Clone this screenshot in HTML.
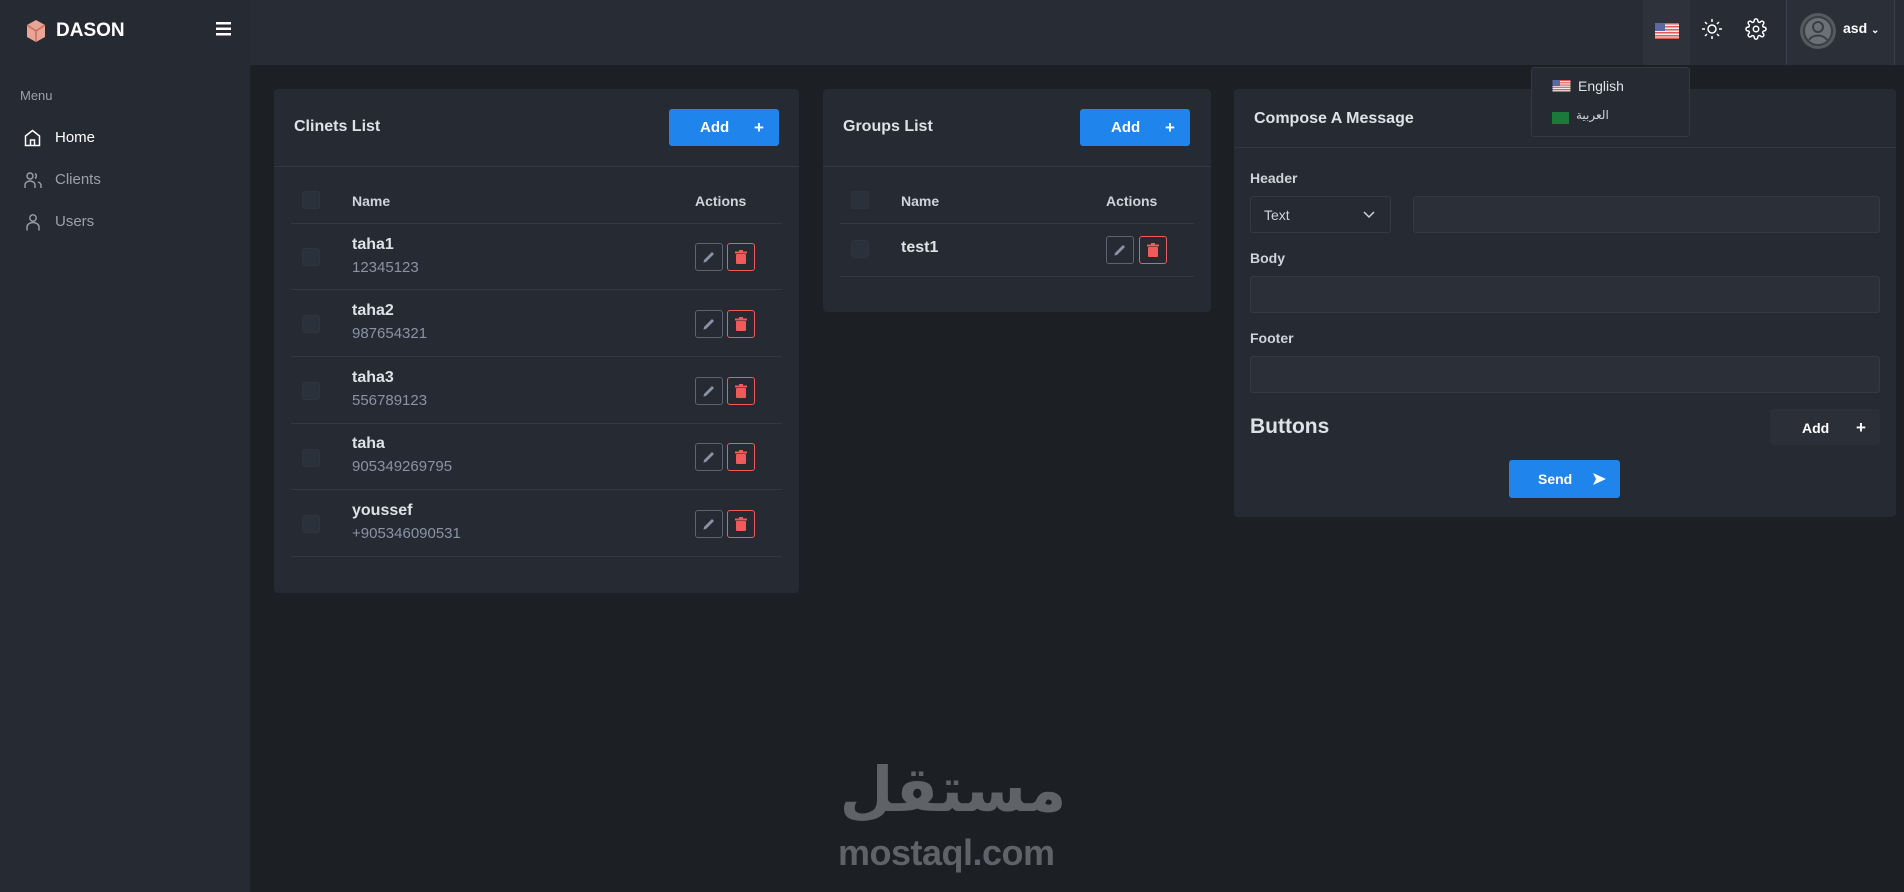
<!DOCTYPE html>
<html><head><meta charset="utf-8"><style>
*{box-sizing:border-box;margin:0;padding:0}
body{width:1904px;height:892px;background:#1c1f24;font-family:"Liberation Sans","Noto Sans CJK SC",sans-serif;position:relative;overflow:hidden;color:#ced4da}
.a{position:absolute}
.side{left:0;top:0;width:250px;height:892px;background:#252a33}
.top{left:250px;top:0;width:1654px;height:65px;background:#282d35}
.card{background:#252a33;border-radius:4px}
.btn{background:#1f84ec;color:#fff;border-radius:3px;font-size:15px;font-weight:bold}
.hr{height:1px;background:#333943}
.cb{width:18px;height:18px;border-radius:3px;background:#2b313a;border:1px solid #2f353e}
.nm{font-weight:bold;font-size:16px;color:#dee2e6}
.ph{font-size:15px;color:#8a93a5}
.th{font-size:14px;font-weight:bold;color:#ced4da}
.eb{width:28px;height:28px;border:1px solid #5d6470;border-radius:3px}
.db{width:28px;height:28px;border:1px solid #f05a5a;border-radius:3px}
.lbl{font-size:14px;font-weight:bold;color:#ced4da}
.inp{background:#2a2f38;border:1px solid #343a44;border-radius:3px}
.pl{font-size:17px;line-height:17px}
</style></head><body>
<div class="a side"></div>
<div class="a top"></div>
<svg class="a" style="left:26px;top:19px" width="20" height="24" viewBox="0 0 20 24"><path d="M10 1 L19 6 V18 L10 23 L1 18 V6Z" fill="#e8a494"/><path d="M10 12 V23 M1 6 L10 12 L19 6" stroke="#c76f5e" stroke-width="1.5" fill="none"/></svg>
<div class="a" style="left:56px;top:20px;font-size:19px;font-weight:bold;color:#fff">DASON</div>
<svg class="a" style="left:216px;top:22px" width="15" height="14"><rect y="0" width="15" height="2.5" fill="#fff"/><rect y="5.5" width="15" height="2.5" fill="#fff"/><rect y="11" width="15" height="2.5" fill="#fff"/></svg>
<div class="a" style="left:20px;top:88px;font-size:13px;color:#9aa1ab">Menu</div>
<svg class="a" style="left:24px;top:129px" width="17" height="18" viewBox="0 0 17 18" fill="none" stroke="#fff" stroke-width="1.5"><path d="M1.5 7 L8.5 1.5 L15.5 7 V16.5 H1.5Z M6.5 16.5 V11 H10.5 V16.5"/></svg>
<div class="a" style="left:55px;top:129px;font-size:15px;color:#fff">Home</div>
<svg class="a" style="left:24px;top:171px" width="18" height="18" viewBox="0 0 18 18" fill="none" stroke="#9aa1ab" stroke-width="1.4"><circle cx="6" cy="5" r="3"/><path d="M1 17 V14 a5 4 0 0 1 10 0 V17 M11 2.5 a3 3 0 0 1 0 5 M14 11 a4 4 0 0 1 3 3 V17"/></svg>
<div class="a" style="left:55px;top:171px;font-size:15px;color:#9aa1ab">Clients</div>
<svg class="a" style="left:25px;top:213px" width="16" height="18" viewBox="0 0 16 18" fill="none" stroke="#9aa1ab" stroke-width="1.4"><circle cx="8" cy="5" r="3.2"/><path d="M2 17.5 V14 a6 4.5 0 0 1 12 0 V17.5"/></svg>
<div class="a" style="left:55px;top:213px;font-size:15px;color:#9aa1ab">Users</div>

<div class="a" style="left:1643px;top:0;width:47px;height:65px;background:#2e333b"></div>
<svg class="a" style="left:1655px;top:23px" width="24" height="16" viewBox="0 0 24 16"><rect width="24" height="16" fill="#eee"/><g fill="#e05a5a"><rect y="0" width="24" height="1.5"/><rect y="3" width="24" height="1.5"/><rect y="6" width="24" height="1.5"/><rect y="9" width="24" height="1.5"/><rect y="12" width="24" height="1.5"/><rect y="14.5" width="24" height="1.5"/></g><rect width="10" height="8" fill="#5a6aa0"/></svg>
<svg class="a" style="left:1701px;top:18px" width="22" height="22" viewBox="0 0 22 22" fill="none" stroke="#fff" stroke-width="1.5"><circle cx="11" cy="11" r="4"/><path d="M11 1v3M11 18v3M1 11h3M18 11h3M4 4l2 2M16 16l2 2M4 18l2-2M16 6l2-2"/></svg>
<svg class="a" style="left:1745px;top:18px" width="22" height="22" viewBox="0 0 24 24" fill="none" stroke="#fff" stroke-width="1.6"><circle cx="12" cy="12" r="3"/><path d="M19.4 15a1.7 1.7 0 0 0 .3 1.8l.1.1a2 2 0 1 1-2.8 2.8l-.1-.1a1.7 1.7 0 0 0-2.9 1.2V21a2 2 0 1 1-4 0v-.1a1.7 1.7 0 0 0-2.9-1.2l-.1.1a2 2 0 1 1-2.8-2.8l.1-.1A1.7 1.7 0 0 0 3.1 14H3a2 2 0 1 1 0-4h.1a1.7 1.7 0 0 0 1.2-2.9l-.1-.1a2 2 0 1 1 2.8-2.8l.1.1A1.7 1.7 0 0 0 10 3.1V3a2 2 0 1 1 4 0v.1a1.7 1.7 0 0 0 2.9 1.2l.1-.1a2 2 0 1 1 2.8 2.8l-.1.1A1.7 1.7 0 0 0 20.9 10H21a2 2 0 1 1 0 4h-.1a1.7 1.7 0 0 0-1.5 1z"/></svg>
<div class="a" style="left:1786px;top:0;width:109px;height:65px;background:#2b3038;border-left:1px solid #3a4049;border-right:1px solid #3a4049"></div>
<svg class="a" style="left:1799px;top:12px" width="38" height="38" viewBox="0 0 38 38"><circle cx="19" cy="19" r="18" fill="#555a60"/><circle cx="19" cy="19" r="14" fill="#6b7075" stroke="#3a3e44" stroke-width="2"/><circle cx="19" cy="15" r="5" fill="none" stroke="#3a3e44" stroke-width="2"/><path d="M10 28 a10 8 0 0 1 18 0" fill="none" stroke="#3a3e44" stroke-width="2"/></svg>
<div class="a" style="left:1843px;top:20px;font-size:14px;font-weight:bold;color:#fff">asd <span style="font-size:10px">⌄</span></div>

<div class="a card" style="left:274px;top:89px;width:525px;height:504px"></div>
<div class="a" style="left:294px;top:118px;font-size:16px;font-weight:bold;color:#dee2e6">Clinets List</div>
<div class="a btn" style="left:669px;top:109px;width:110px;height:37px"><span class="a" style="left:31px;top:10px">Add</span><span class="a pl" style="left:85px;top:10px">+</span></div>
<div class="a hr" style="left:274px;top:166px;width:525px"></div>
<div class="a cb" style="left:302px;top:191px"></div>
<div class="a th" style="left:352px;top:193px">Name</div>
<div class="a th" style="left:695px;top:193px">Actions</div>
<div class="a hr" style="left:291px;top:223px;width:491px"></div>

<div class="a cb" style="left:302px;top:248px"></div><div class="a nm" style="left:352px;top:236px">taha1</div><div class="a ph" style="left:352px;top:259px">12345123</div>
<div class="a hr" style="left:291px;top:289px;width:491px"></div>
<div class="a cb" style="left:302px;top:315px"></div><div class="a nm" style="left:352px;top:302px">taha2</div><div class="a ph" style="left:352px;top:325px">987654321</div>
<div class="a hr" style="left:291px;top:356px;width:491px"></div>
<div class="a cb" style="left:302px;top:382px"></div><div class="a nm" style="left:352px;top:369px">taha3</div><div class="a ph" style="left:352px;top:392px">556789123</div>
<div class="a hr" style="left:291px;top:423px;width:491px"></div>
<div class="a cb" style="left:302px;top:449px"></div><div class="a nm" style="left:352px;top:435px">taha</div><div class="a ph" style="left:352px;top:458px">905349269795</div>
<div class="a hr" style="left:291px;top:489px;width:491px"></div>
<div class="a cb" style="left:302px;top:515px"></div><div class="a nm" style="left:352px;top:502px">youssef</div><div class="a ph" style="left:352px;top:525px">+905346090531</div>
<div class="a hr" style="left:291px;top:556px;width:491px"></div>

<div class="a card" style="left:823px;top:89px;width:388px;height:223px"></div>
<div class="a" style="left:843px;top:118px;font-size:16px;font-weight:bold;color:#dee2e6">Groups List</div>
<div class="a btn" style="left:1080px;top:109px;width:110px;height:37px"><span class="a" style="left:31px;top:10px">Add</span><span class="a pl" style="left:85px;top:10px">+</span></div>
<div class="a hr" style="left:823px;top:166px;width:388px"></div>
<div class="a cb" style="left:851px;top:191px"></div>
<div class="a th" style="left:901px;top:193px">Name</div>
<div class="a th" style="left:1106px;top:193px">Actions</div>
<div class="a hr" style="left:840px;top:223px;width:354px"></div>
<div class="a cb" style="left:851px;top:240px"></div><div class="a nm" style="left:901px;top:239px">test1</div>
<div class="a hr" style="left:840px;top:276px;width:354px"></div>

<div class="a card" style="left:1234px;top:89px;width:662px;height:428px"></div>
<div class="a" style="left:1254px;top:110px;font-size:16px;font-weight:bold;color:#dee2e6">Compose A Message</div>
<div class="a hr" style="left:1234px;top:147px;width:662px"></div>
<div class="a lbl" style="left:1250px;top:170px">Header</div>
<div class="a inp" style="left:1250px;top:196px;width:141px;height:37px;background:#252a33"><span class="a" style="left:13px;top:10px;font-size:14px;color:#ced4da">Text</span><svg class="a" style="left:112px;top:14px" width="12" height="8"><path d="M1 1 L6 6 L11 1" stroke="#ced4da" stroke-width="1.5" fill="none"/></svg></div>
<div class="a inp" style="left:1413px;top:196px;width:467px;height:37px"></div>
<div class="a lbl" style="left:1250px;top:250px">Body</div>
<div class="a inp" style="left:1250px;top:276px;width:630px;height:37px"></div>
<div class="a lbl" style="left:1250px;top:330px">Footer</div>
<div class="a inp" style="left:1250px;top:356px;width:630px;height:37px"></div>
<div class="a" style="left:1250px;top:415px;font-size:21px;font-weight:bold;color:#dee2e6">Buttons</div>
<div class="a" style="left:1770px;top:409px;width:110px;height:36px;background:#2a2f38;border-radius:3px;color:#fff;font-size:14px;font-weight:bold"><span class="a" style="left:32px;top:11px">Add</span><span class="a pl" style="left:86px;top:10px">+</span></div>
<div class="a btn" style="left:1509px;top:460px;width:111px;height:38px;font-size:14px"><span class="a" style="left:29px;top:11px">Send</span><svg class="a" style="left:84px;top:13px" width="13" height="12"><path d="M0 0 L13 6 L0 12 L3 6Z" fill="#fff"/></svg></div>

<div class="a" style="left:1531px;top:67px;width:159px;height:70px;background:#252a33;border:1px solid #333943;border-radius:3px"></div>
<svg class="a" style="left:1552px;top:80px" width="19" height="12" viewBox="0 0 24 16"><rect width="24" height="16" fill="#eee"/><g fill="#e05a5a"><rect y="0" width="24" height="1.5"/><rect y="3" width="24" height="1.5"/><rect y="6" width="24" height="1.5"/><rect y="9" width="24" height="1.5"/><rect y="12" width="24" height="1.5"/><rect y="14.5" width="24" height="1.5"/></g><rect width="10" height="8" fill="#5a6aa0"/></svg>
<div class="a" style="left:1578px;top:78px;font-size:14px;color:#dee2e6">English</div>
<div class="a" style="left:1552px;top:112px;width:17px;height:12px;background:#1b7a3a"></div>
<div class="a" style="left:1576px;top:108px;font-size:12px;color:#ced4da;font-family:'Liberation Sans','DejaVu Sans',sans-serif">العربية</div>

<div class="a" style="left:808px;top:750px;width:290px;text-align:center;font-size:62px;font-weight:bold;color:#5f6266;font-family:'DejaVu Sans',sans-serif;line-height:80px">مستقل</div>
<div class="a" style="left:838px;top:832px;font-size:36px;color:#5f6266;font-weight:bold;letter-spacing:-0.5px">mostaql.com</div>

<div class="a eb" style="left:695px;top:243px"></div><div class="a db" style="left:727px;top:243px"></div>
<div class="a eb" style="left:695px;top:310px"></div><div class="a db" style="left:727px;top:310px"></div>
<div class="a eb" style="left:695px;top:377px"></div><div class="a db" style="left:727px;top:377px"></div>
<div class="a eb" style="left:695px;top:443px"></div><div class="a db" style="left:727px;top:443px"></div>
<div class="a eb" style="left:695px;top:510px"></div><div class="a db" style="left:727px;top:510px"></div>
<div class="a eb" style="left:1106px;top:236px"></div><div class="a db" style="left:1139px;top:236px"></div>
<svg class="a" style="left:0;top:0" width="1904" height="892">
<defs><g id="pen"><path d="M4 12 L12 4 L14 6 L6 14 L3.5 14.5Z" fill="#8a93a5"/></g><g id="bin"><rect x="4" y="6" width="10" height="10" rx="1" fill="#f05a5a"/><rect x="3" y="3.5" width="12" height="2" fill="#f05a5a"/><rect x="7" y="2" width="4" height="2" fill="#f05a5a"/></g></defs>
<use href="#pen" x="700" y="248"/><use href="#bin" x="732" y="248"/>
<use href="#pen" x="700" y="315"/><use href="#bin" x="732" y="315"/>
<use href="#pen" x="700" y="382"/><use href="#bin" x="732" y="382"/>
<use href="#pen" x="700" y="448"/><use href="#bin" x="732" y="448"/>
<use href="#pen" x="700" y="515"/><use href="#bin" x="732" y="515"/>
<use href="#pen" x="1111" y="241"/><use href="#bin" x="1144" y="241"/>
</svg>
</body></html>
